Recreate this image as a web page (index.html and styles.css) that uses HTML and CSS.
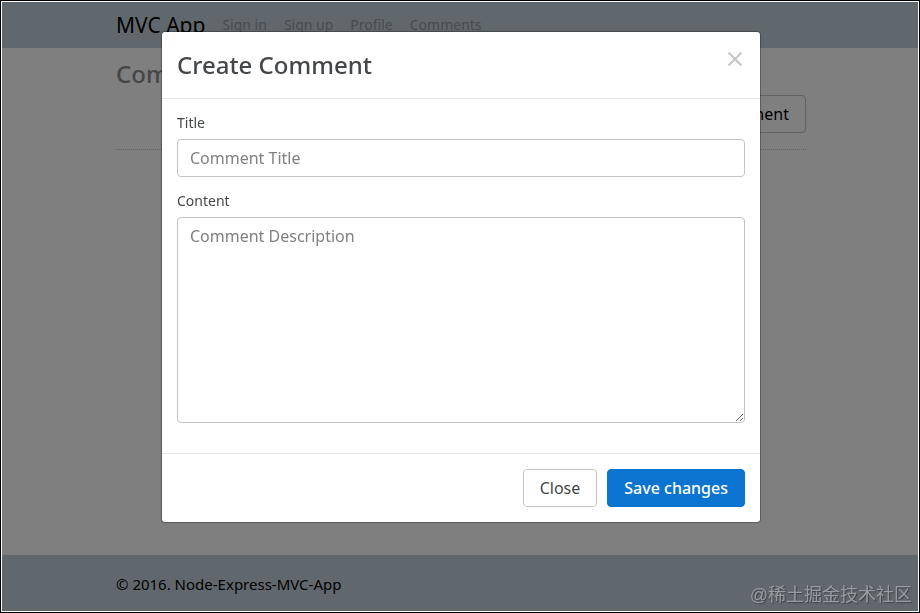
FILE: index.html
```
<!DOCTYPE html>
<html lang="en">
<head>
    <meta charset="UTF-8">
    <meta name="viewport" content="width=device-width, initial-scale=1.0">
    <title>MVC App</title>
    <link rel="stylesheet" href="styles.css">
</head>
<body>
<div class="page">
    <nav class="navbar">
        <div class="container navbar-inner">
            <a class="brand" href="#">MVC App</a>
            <a class="nav-link" href="#">Sign in</a>
            <a class="nav-link" href="#">Sign up</a>
            <a class="nav-link" href="#">Profile</a>
            <a class="nav-link" href="#">Comments</a>
        </div>
    </nav>

    <main class="container content">
        <h1>Comments</h1>
        <div class="toolbar">
            <button type="button" class="btn btn-create">Create Comment</button>
        </div>
        <hr>
    </main>

    <footer class="footer">
        <div class="container">&copy; 2016. Node-Express-MVC-App</div>
    </footer>
</div>

<div class="backdrop">
    <div class="modal" role="dialog" aria-labelledby="modalTitle">
        <div class="modal-header">
            <h2 id="modalTitle">Create Comment</h2>
            <button type="button" class="close" aria-label="Close">
                <svg width="16" height="16" viewBox="0 0 16 16"><path d="M1.500 1.500L14.500 14.500M14.500 1.500L1.500 14.500" stroke="#c4c4c4" stroke-width="2" fill="none"/></svg>
            </button>
        </div>
        <form class="modal-body">
            <label for="title">Title</label>
            <input type="text" id="title" placeholder="Comment Title">
            <label for="content">Content</label>
            <textarea id="content" rows="8" placeholder="Comment Description"></textarea>
        </form>
        <div class="modal-footer">
            <button type="button" class="btn">Close</button>
            <button type="button" class="btn btn-primary">Save changes</button>
        </div>
    </div>
</div>

<div class="watermark" lang="zh">@稀土掘金技术社区</div>
</body>
</html>
```
FILE: styles.css
```
* {
    margin: 0;
    padding: 0;
    box-sizing: border-box;
}

body {
    min-height: 100vh;
    display: flex;
    border: 1px solid #000;
    padding: 1px;
    background: #fff;
    color: #444749;
    font-family: "Noto Sans", "Open Sans", sans-serif;
    font-size: 16px;
    line-height: 24px;
}

.page {
    flex: 1;
    display: flex;
    flex-direction: column;
}

.container {
    width: 100%;
    max-width: 720px;
    margin: 0 auto;
    padding: 0 14px 0 16px;
}

.navbar {
    background: #c3d1da;
}

.navbar-inner {
    display: flex;
    align-items: center;
    gap: 17px;
    height: 46px;
}

.navbar a {
    text-decoration: none;
}

.brand {
    font-size: 21px;
    color: #000;
}

.nav-link {
    font-size: 14px;
    color: #8d979e;
}

.content {
    flex: 1;
}

h1 {
    margin: 8px 0 3px;
    font-size: 24px;
    line-height: 36px;
    font-weight: 500;
    color: #888c90;
}

.toolbar {
    display: flex;
    justify-content: flex-end;
}

hr {
    margin-top: 16px;
    border: 0;
    border-top: 1px dotted #c4c4c4;
}

.footer {
    padding: 17px 0 15px;
    background: #c3d1da;
    color: #000;
    font-size: 15px;
}

.btn {
    padding: 6px 16px;
    border: 1px solid #c4c4c4;
    border-radius: 4px;
    background: #fff;
    color: #444749;
    font: inherit;
    cursor: pointer;
}

.btn-create {
    color: #000;
}

.btn-primary {
    border-color: #0b74d1;
    background: #0b74d1;
    color: #fff;
    font-weight: 500;
}

.backdrop {
    position: fixed;
    inset: 2px;
    padding: 30px 15px 30px 17px;
    background: rgba(0, 0, 0, 0.5);
}

.modal {
    max-width: 598px;
    margin: 0 auto;
    border-radius: 3px;
    background: #fff;
    box-shadow: 0 0 1px 1px rgba(0, 0, 0, 0.3);
}

.modal-header {
    display: flex;
    justify-content: space-between;
    align-items: flex-start;
    padding: 15px;
    border-bottom: 1px solid #e5e5e5;
}

h2 {
    font-size: 24px;
    line-height: 36px;
    font-weight: 500;
}

.close {
    display: flex;
    padding: 4px 2px;
    border: 0;
    background: none;
    cursor: pointer;
}

.modal-body {
    padding: 12px 15px 30px;
}

label {
    display: block;
    margin-bottom: 4px;
    font-size: 14px;
}

input,
textarea {
    display: block;
    width: 100%;
    padding: 6px 12px;
    border: 1px solid #c4c4c4;
    border-radius: 4px;
    background: #fff;
    color: #444749;
    font: inherit;
}

input {
    margin-bottom: 12px;
}

input::placeholder,
textarea::placeholder {
    color: #818181;
}

.modal-footer {
    display: flex;
    justify-content: flex-end;
    gap: 10px;
    padding: 15px;
    border-top: 1px solid #e5e5e5;
}

.watermark {
    position: fixed;
    right: 8px;
    bottom: 6px;
    color: #969ca1;
    font-family: "Liberation Sans", "Noto Sans CJK SC", sans-serif;
    font-size: 18px;
    text-shadow: 1px 1px 1px #3c4248;
}
```
